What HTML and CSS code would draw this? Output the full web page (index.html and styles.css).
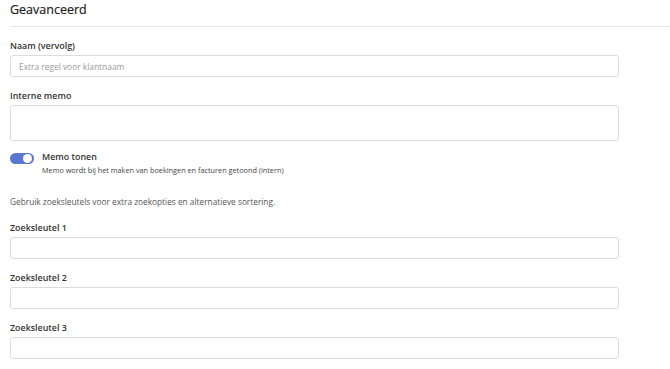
FILE: index.html
```html
<!DOCTYPE html>
<html lang="nl">
<head>
  <meta charset="UTF-8" />
  <meta name="viewport" content="width=device-width, initial-scale=1.0" />
  <title>Geavanceerd</title>
  <link rel="stylesheet" href="styles.css">
</head>
<body>
  <div class="section-head">
    <h2>Geavanceerd</h2>
  </div>

  <form class="advanced">
    <div class="field">
      <label>Naam (vervolg)</label>
      <input type="text" placeholder="Extra regel voor klantnaam">
    </div>

    <div class="field memo">
      <label>Interne memo</label>
      <textarea></textarea>
    </div>

    <div class="switch-row">
      <span class="switch"><span class="knob"></span></span>
      <div>
        <div class="switch-title">Memo tonen</div>
        <div class="switch-desc">Memo wordt bij het maken van boekingen en facturen getoond (intern)</div>
      </div>
    </div>

    <p class="hint">Gebruik zoeksleutels voor extra zoekopties en alternatieve sortering.</p>

    <div class="field">
      <label>Zoeksleutel 1</label>
      <input type="text">
    </div>
    <div class="field">
      <label>Zoeksleutel 2</label>
      <input type="text">
    </div>
    <div class="field">
      <label>Zoeksleutel 3</label>
      <input type="text">
    </div>
  </form>
</body>
</html>
```

FILE: styles.css
```css
body {
  margin: 0;
  padding-left: 10px;
  background: white;
  color: #333;
  font-family: 'Open Sans', 'Segoe UI', sans-serif;
  overflow: hidden;
}

.section-head {
  height: 26px;
  border-bottom: 1px solid #e6e6e6;
}

.section-head h2 {
  margin: 0;
  padding-top: 2px;
  font-size: 12.5px;
  line-height: 16px;
  font-weight: 500;
  color: #222;
  -webkit-text-stroke: 0.2px #222;
}

.advanced {
  width: 609px;
  padding-top: 12px;
}

.field {
  margin-bottom: 12px;
}

.field.memo {
  margin-bottom: 9px;
}

.field label {
  display: block;
  font-size: 8.9px;
  line-height: 14px;
  font-weight: 600;
  color: #333;
  margin-bottom: 2px;
}

.field input,
.field textarea {
  display: block;
  box-sizing: border-box;
  width: 100%;
  height: 22px;
  margin: 0;
  padding: 0 8px;
  border: 1px solid #dcdcdc;
  border-radius: 3px;
  font-family: inherit;
  font-size: 8.4px;
  color: #333;
  background: white;
  resize: none;
}

.field textarea {
  height: 36px;
}

.field input::placeholder {
  color: #9a9a9a;
}

.switch-row {
  display: flex;
  gap: 8px;
  align-items: flex-start;
}

.switch {
  position: relative;
  width: 24px;
  height: 11px;
  margin-top: 3px;
  border-radius: 6px;
  background: #5a78d2;
  flex-shrink: 0;
}

.switch .knob {
  position: absolute;
  top: 1px;
  right: 2px;
  width: 9px;
  height: 9px;
  border-radius: 50%;
  background: white;
}

.switch-title {
  font-size: 8.9px;
  line-height: 14px;
  font-weight: 600;
  color: #333;
}

.switch-desc {
  font-size: 7.3px;
  line-height: 12px;
  color: #444;
}

.hint {
  margin: 19px 0 12px;
  font-size: 8.3px;
  line-height: 14px;
  color: #555;
}
```
